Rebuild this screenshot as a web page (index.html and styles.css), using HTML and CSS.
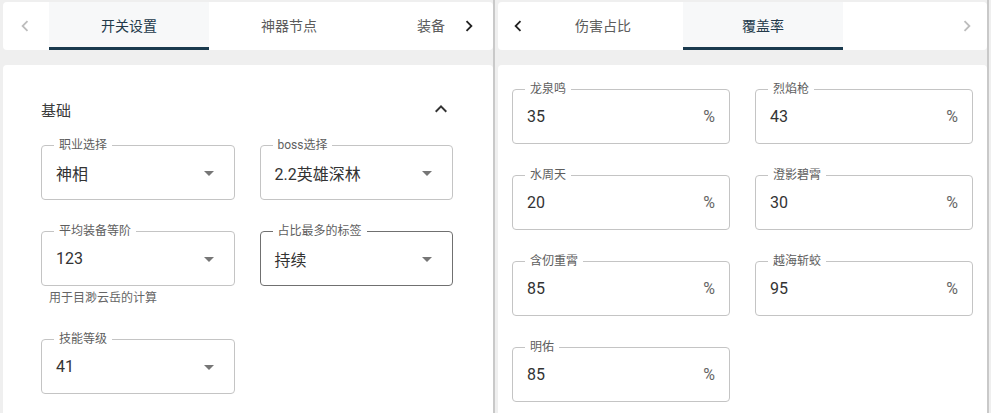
FILE: index.html
```html
<!DOCTYPE html>
<html lang="zh-CN">
<head>
    <meta charset="UTF-8">
    <meta name="viewport" content="width=device-width, initial-scale=1.0">
    <title>设置</title>
    <link rel="stylesheet" href="styles.css">
</head>
<body>
    <div class="page">
        <!-- left column: switches and basic settings -->
        <section class="panel panel-settings">
            <div class="tabbar">
                <button class="scroll-btn is-disabled">
                    <svg viewBox="0 0 24 24"><path d="M15.41 16.59L10.83 12l4.58-4.59L14 6l-6 6 6 6 1.41-1.41z"/></svg>
                </button>
                <div class="tab-viewport">
                    <div class="tab-list">
                        <div class="tab is-active">开关设置</div>
                        <div class="tab">神器节点</div>
                        <div class="tab tab-peek">装备</div>
                    </div>
                </div>
                <button class="scroll-btn">
                    <svg viewBox="0 0 24 24"><path d="M8.59 16.59L13.17 12 8.59 7.41 10 6l6 6-6 6-1.41-1.41z"/></svg>
                </button>
            </div>

            <div class="card card-settings">
                <div class="section-head">
                    <span>基础</span>
                    <svg class="chevron" viewBox="0 0 24 24"><path d="M12 8l-6 6 1.41 1.41L12 10.83l4.59 4.58L18 14z"/></svg>
                </div>

                <div class="field-grid">
                    <div class="field">
                        <div class="outlined">
                            <span class="legend">职业选择</span>
                            <span class="value">神相</span>
                            <svg class="caret" viewBox="0 0 24 24"><path d="M7 10l5 5 5-5z"/></svg>
                        </div>
                    </div>
                    <div class="field">
                        <div class="outlined">
                            <span class="legend">boss选择</span>
                            <span class="value">2.2英雄深林</span>
                            <svg class="caret" viewBox="0 0 24 24"><path d="M7 10l5 5 5-5z"/></svg>
                        </div>
                    </div>
                    <div class="field">
                        <div class="outlined">
                            <span class="legend">平均装备等阶</span>
                            <span class="value">123</span>
                            <svg class="caret" viewBox="0 0 24 24"><path d="M7 10l5 5 5-5z"/></svg>
                        </div>
                        <p class="helper">用于目渺云岳的计算</p>
                    </div>
                    <div class="field">
                        <div class="outlined is-hover">
                            <span class="legend">占比最多的标签</span>
                            <span class="value">持续</span>
                            <svg class="caret" viewBox="0 0 24 24"><path d="M7 10l5 5 5-5z"/></svg>
                        </div>
                    </div>
                    <div class="field">
                        <div class="outlined">
                            <span class="legend">技能等级</span>
                            <span class="value">41</span>
                            <svg class="caret" viewBox="0 0 24 24"><path d="M7 10l5 5 5-5z"/></svg>
                        </div>
                    </div>
                </div>
            </div>
        </section>

        <!-- right column: damage share / coverage -->
        <section class="panel panel-rates">
            <div class="tabbar tabbar-compact">
                <button class="scroll-btn">
                    <svg viewBox="0 0 24 24"><path d="M15.41 16.59L10.83 12l4.58-4.59L14 6l-6 6 6 6 1.41-1.41z"/></svg>
                </button>
                <div class="tab-viewport">
                    <div class="tab-list scrolled">
                        <div class="tab">伤害占比</div>
                        <div class="tab is-active">覆盖率</div>
                    </div>
                </div>
                <button class="scroll-btn is-disabled">
                    <svg viewBox="0 0 24 24"><path d="M8.59 16.59L13.17 12 8.59 7.41 10 6l6 6-6 6-1.41-1.41z"/></svg>
                </button>
            </div>

            <div class="card card-rates">
                <div class="field-grid">
                    <div class="outlined">
                        <span class="legend">龙泉鸣</span>
                        <span class="value">35</span>
                        <span class="unit">%</span>
                    </div>
                    <div class="outlined">
                        <span class="legend">烈焰枪</span>
                        <span class="value">43</span>
                        <span class="unit">%</span>
                    </div>
                    <div class="outlined">
                        <span class="legend">水周天</span>
                        <span class="value">20</span>
                        <span class="unit">%</span>
                    </div>
                    <div class="outlined">
                        <span class="legend">澄影碧霄</span>
                        <span class="value">30</span>
                        <span class="unit">%</span>
                    </div>
                    <div class="outlined">
                        <span class="legend">含仞重霄</span>
                        <span class="value">85</span>
                        <span class="unit">%</span>
                    </div>
                    <div class="outlined">
                        <span class="legend">越海斩蛟</span>
                        <span class="value">95</span>
                        <span class="unit">%</span>
                    </div>
                    <div class="outlined">
                        <span class="legend">明佑</span>
                        <span class="value">85</span>
                        <span class="unit">%</span>
                    </div>
                </div>
            </div>
        </section>
    </div>
</body>
</html>
```

FILE: styles.css
```css
* {
    box-sizing: border-box;
}

body {
    margin: 0;
    background-color: #efefef;
    font-family: Roboto, "Noto Sans CJK SC", sans-serif;
    color: #2b2b2b;
}

.page {
    display: flex;
    gap: 3px;
    height: 100vh;
    padding-left: 3px;
    overflow: hidden;
}

.panel {
    display: flex;
    flex-direction: column;
    padding-top: 2px;
    border-right: 2px solid #c9c9c9;
}

.panel-settings {
    width: 492px;
}

.panel-rates {
    width: 491px;
}

/* tab bar */
.tabbar {
    display: flex;
    flex: none;
    height: 48px;
    background-color: #fff;
    border-radius: 4px;
}

.scroll-btn {
    display: flex;
    align-items: center;
    justify-content: center;
    flex: none;
    width: 46px;
    padding: 0 3px 0 0;
    border: none;
    background: transparent;
    color: #222;
    cursor: pointer;
}

.tabbar-compact .scroll-btn {
    width: 40px;
    padding: 0;
}

.scroll-btn svg {
    width: 22px;
    height: 22px;
    fill: currentColor;
}

.scroll-btn.is-disabled {
    color: #bdbdbd;
    cursor: default;
}

.tab-viewport {
    display: flex;
    flex: 1;
    overflow: hidden;
}

.tab-list {
    display: flex;
}

.tab-list.scrolled {
    margin-left: -15px;
}

.tab {
    display: flex;
    align-items: center;
    justify-content: center;
    flex: none;
    width: 160px;
    padding-bottom: 3px;
    font-size: 14px;
    color: #5c5c5c;
    white-space: nowrap;
}

/* last tab only half scrolled into view */
.tab.tab-peek {
    width: 78px;
    justify-content: flex-start;
    padding-left: 48px;
}

.tab.is-active {
    background-color: #f7f8f9;
    color: #23394a;
    box-shadow: inset 0 -3px 0 #1a3a4e;
}

/* content cards */
.card {
    flex: 1;
    margin-top: 15px;
    background-color: #fff;
    border-radius: 4px 4px 0 0;
}

.card-settings {
    padding: 32px 40px 0 38px;
}

.card-rates {
    padding: 24px 14px 0 14px;
}

.section-head {
    display: flex;
    align-items: center;
    justify-content: space-between;
    height: 24px;
    margin-bottom: 24px;
    font-size: 15px;
    color: #3a3a3a;
}

.chevron {
    width: 24px;
    height: 24px;
    fill: #333;
}

.field-grid {
    display: grid;
    grid-template-columns: 1fr 1fr;
    column-gap: 25px;
    row-gap: 31px;
    align-items: start;
}

/* outlined inputs */
.outlined {
    position: relative;
    display: flex;
    align-items: center;
    height: 55px;
    padding: 0 14px;
    border: 1px solid #c4c4c4;
    border-radius: 4px;
}

.outlined.is-hover {
    border-color: #707070;
}

.legend {
    position: absolute;
    top: -8px;
    left: 12px;
    padding: 0 5px;
    background-color: #fff;
    font-size: 12px;
    line-height: 14px;
    color: #5e5e5e;
    white-space: nowrap;
}

.value {
    flex: 1;
    font-size: 16px;
    color: #333;
}

.caret {
    width: 24px;
    height: 24px;
    fill: #767676;
    margin-right: -1px;
}

.unit {
    font-size: 16px;
    color: #666;
}

.helper {
    margin: 3px 0 0 8px;
    font-size: 12px;
    line-height: 19px;
    color: #666;
}
```
